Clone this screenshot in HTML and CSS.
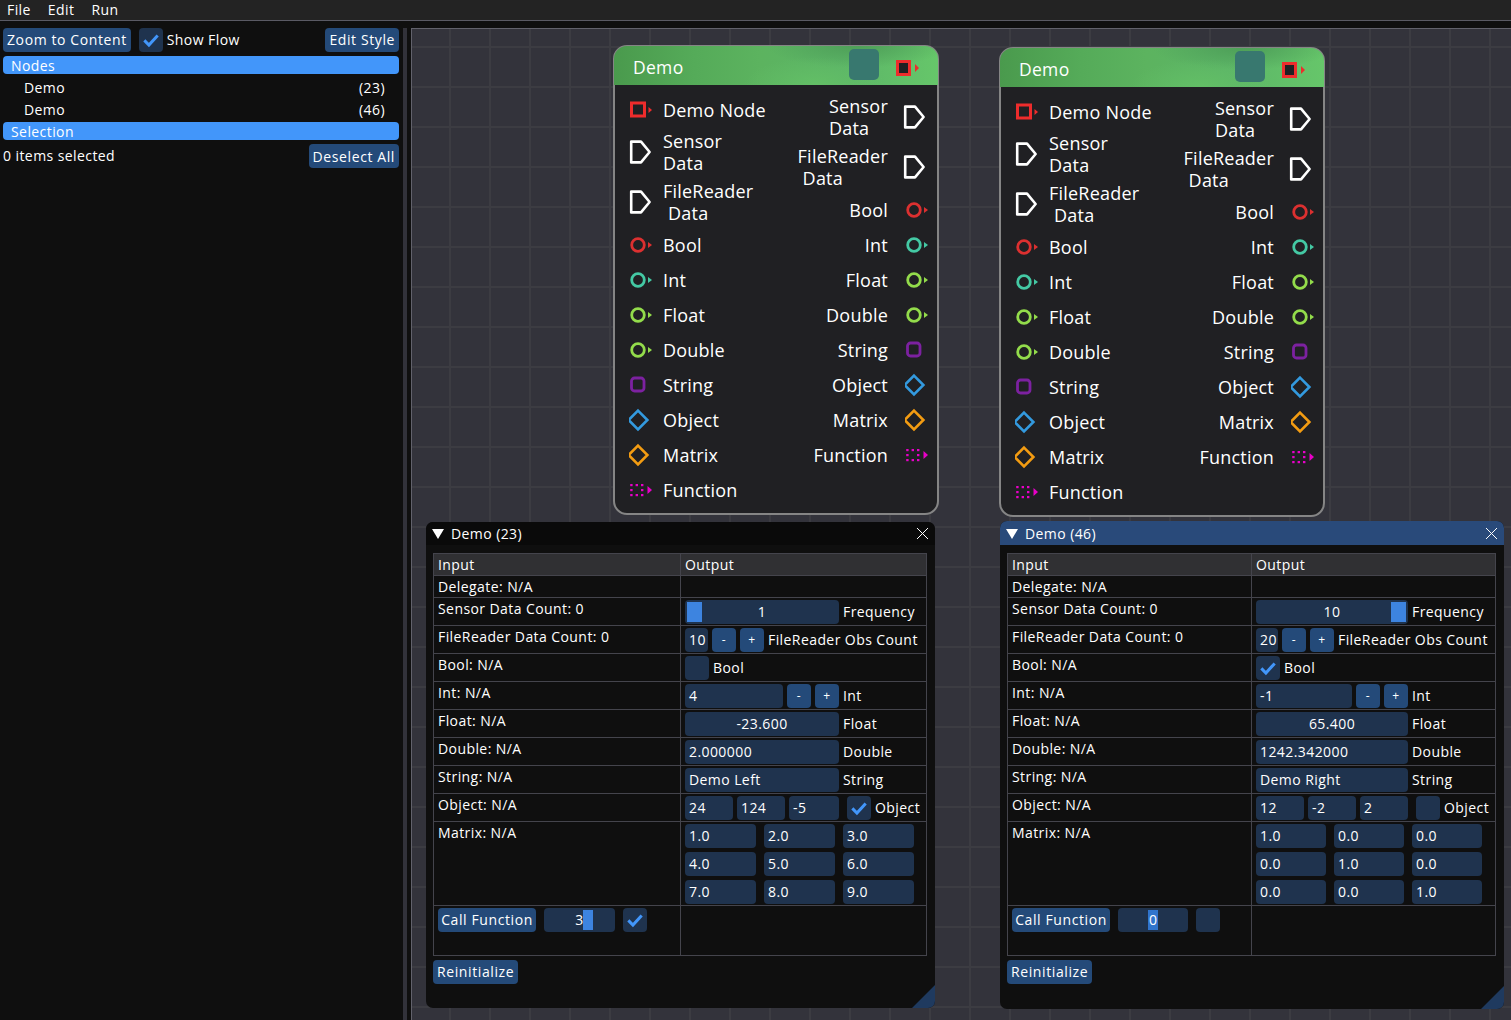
FILE: index.html
```html
<!DOCTYPE html>
<html lang="en">
<head>
    <meta charset="UTF-8">
    <meta name="viewport" content="width=device-width, initial-scale=1.0">
    <title>Blueprint Demo</title>
    <link rel="stylesheet" href="styles.css">
</head>
<body>
    <svg class="defs" width="0" height="0">
        <defs>
            <symbol id="check" viewBox="0 0 24 24"><path d="M4 12.5 L9.5 18 L20 6.5" fill="none" stroke="#4296fa" stroke-width="3.6"/></symbol>
            <symbol id="flow" viewBox="0 0 24 24"><path d="M2.2 1.6 H12 L20.6 12 L12 22.4 H2.2 Z" fill="none" stroke="#fff" stroke-width="2.6" stroke-linejoin="round"/></symbol>
            <symbol id="ring" viewBox="0 0 24 24"><circle cx="9" cy="12" r="6.3" fill="none" stroke="currentColor" stroke-width="2.8"/><path d="M19 9 L23 12 L19 15 Z" fill="currentColor"/></symbol>
            <symbol id="square" viewBox="0 0 24 24"><rect x="2.5" y="5" width="13" height="13" fill="none" stroke="currentColor" stroke-width="3"/><path d="M19.5 9 L23 12 L19.5 15 Z" fill="currentColor"/></symbol>
            <symbol id="rsquare" viewBox="0 0 24 24"><rect x="2.5" y="5" width="12.5" height="13" rx="3" fill="none" stroke="currentColor" stroke-width="2.8"/></symbol>
            <symbol id="diamond" viewBox="0 0 24 24"><path d="M9 2.6 L18.4 12 L9 21.4 L-0.4 12 Z" fill="none" stroke="currentColor" stroke-width="2.6"/></symbol>
            <symbol id="grip" viewBox="0 0 24 24">
                <g fill="currentColor">
                    <rect x="1.2" y="6" width="2.4" height="2.2"/><rect x="6.6" y="6" width="2.4" height="2.2"/><rect x="12" y="6" width="2.4" height="2.2"/>
                    <rect x="1.2" y="11" width="2.4" height="2.2"/><rect x="12" y="11" width="2.4" height="2.2"/>
                    <rect x="1.2" y="16" width="2.4" height="2.2"/><rect x="6.6" y="16" width="2.4" height="2.2"/><rect x="12" y="16" width="2.4" height="2.2"/>
                    <path d="M18.5 8 L23 12 L18.5 16 Z"/>
                </g>
            </symbol>
        </defs>
    </svg>

    <header class="menubar">
        <span>File</span>
        <span>Edit</span>
        <span>Run</span>
    </header>

    <div class="main">
        <aside class="sidebar">
            <div class="side-row">
                <button class="btn">Zoom to Content</button>
                <span class="check"><svg><use href="#check"/></svg></span>
                <span class="side-label">Show Flow</span>
                <button class="btn push">Edit Style</button>
            </div>
            <div class="side-head">Nodes</div>
            <div class="side-item"><span>Demo</span><span>(23)</span></div>
            <div class="side-item"><span>Demo</span><span>(46)</span></div>
            <div class="side-head side-head-sel">Selection</div>
            <div class="side-row side-row-sel">
                <span>0 items selected</span>
                <button class="btn push">Deselect All</button>
            </div>
        </aside>
        <div class="splitter"></div>

        <section class="canvas">
            <!-- left node -->
            <div class="node node-left">
                <div class="node-title">
                    <span>Demo</span>
                    <span class="node-thumb"></span>
                    <span class="node-flow"></span>
                    <span class="node-flow-arrow"></span>
                </div>
                <div class="node-body">
                    <div class="pins">
                        <div class="pin"><svg class="c-red"><use href="#square"/></svg><span>Demo Node</span></div>
                        <div class="pin pin-tall"><svg class="flow"><use href="#flow"/></svg><span>Sensor<br>Data</span></div>
                        <div class="pin pin-tall"><svg class="flow"><use href="#flow"/></svg><span>FileReader<br><span class="indent">Data</span></span></div>
                        <div class="pin"><svg class="c-bool"><use href="#ring"/></svg><span>Bool</span></div>
                        <div class="pin"><svg class="c-int"><use href="#ring"/></svg><span>Int</span></div>
                        <div class="pin"><svg class="c-float"><use href="#ring"/></svg><span>Float</span></div>
                        <div class="pin"><svg class="c-float"><use href="#ring"/></svg><span>Double</span></div>
                        <div class="pin"><svg class="c-string"><use href="#rsquare"/></svg><span>String</span></div>
                        <div class="pin"><svg class="c-object"><use href="#diamond"/></svg><span>Object</span></div>
                        <div class="pin"><svg class="c-matrix"><use href="#diamond"/></svg><span>Matrix</span></div>
                        <div class="pin"><svg class="c-func"><use href="#grip"/></svg><span>Function</span></div>
                    </div>
                    <div class="pins pins-out">
                        <div class="pin pin-tall"><span>Sensor<br>Data</span><svg class="flow"><use href="#flow"/></svg></div>
                        <div class="pin pin-tall"><span>FileReader<br><span class="indent">Data</span></span><svg class="flow"><use href="#flow"/></svg></div>
                        <div class="pin"><span>Bool</span><svg class="c-bool"><use href="#ring"/></svg></div>
                        <div class="pin"><span>Int</span><svg class="c-int"><use href="#ring"/></svg></div>
                        <div class="pin"><span>Float</span><svg class="c-float"><use href="#ring"/></svg></div>
                        <div class="pin"><span>Double</span><svg class="c-float"><use href="#ring"/></svg></div>
                        <div class="pin"><span>String</span><svg class="c-string"><use href="#rsquare"/></svg></div>
                        <div class="pin"><span>Object</span><svg class="c-object"><use href="#diamond"/></svg></div>
                        <div class="pin"><span>Matrix</span><svg class="c-matrix"><use href="#diamond"/></svg></div>
                        <div class="pin"><span>Function</span><svg class="c-func"><use href="#grip"/></svg></div>
                    </div>
                </div>
            </div>

            <!-- right node -->
            <div class="node node-right">
                <div class="node-title">
                    <span>Demo</span>
                    <span class="node-thumb"></span>
                    <span class="node-flow"></span>
                    <span class="node-flow-arrow"></span>
                </div>
                <div class="node-body">
                    <div class="pins">
                        <div class="pin"><svg class="c-red"><use href="#square"/></svg><span>Demo Node</span></div>
                        <div class="pin pin-tall"><svg class="flow"><use href="#flow"/></svg><span>Sensor<br>Data</span></div>
                        <div class="pin pin-tall"><svg class="flow"><use href="#flow"/></svg><span>FileReader<br><span class="indent">Data</span></span></div>
                        <div class="pin"><svg class="c-bool"><use href="#ring"/></svg><span>Bool</span></div>
                        <div class="pin"><svg class="c-int"><use href="#ring"/></svg><span>Int</span></div>
                        <div class="pin"><svg class="c-float"><use href="#ring"/></svg><span>Float</span></div>
                        <div class="pin"><svg class="c-float"><use href="#ring"/></svg><span>Double</span></div>
                        <div class="pin"><svg class="c-string"><use href="#rsquare"/></svg><span>String</span></div>
                        <div class="pin"><svg class="c-object"><use href="#diamond"/></svg><span>Object</span></div>
                        <div class="pin"><svg class="c-matrix"><use href="#diamond"/></svg><span>Matrix</span></div>
                        <div class="pin"><svg class="c-func"><use href="#grip"/></svg><span>Function</span></div>
                    </div>
                    <div class="pins pins-out">
                        <div class="pin pin-tall"><span>Sensor<br>Data</span><svg class="flow"><use href="#flow"/></svg></div>
                        <div class="pin pin-tall"><span>FileReader<br><span class="indent">Data</span></span><svg class="flow"><use href="#flow"/></svg></div>
                        <div class="pin"><span>Bool</span><svg class="c-bool"><use href="#ring"/></svg></div>
                        <div class="pin"><span>Int</span><svg class="c-int"><use href="#ring"/></svg></div>
                        <div class="pin"><span>Float</span><svg class="c-float"><use href="#ring"/></svg></div>
                        <div class="pin"><span>Double</span><svg class="c-float"><use href="#ring"/></svg></div>
                        <div class="pin"><span>String</span><svg class="c-string"><use href="#rsquare"/></svg></div>
                        <div class="pin"><span>Object</span><svg class="c-object"><use href="#diamond"/></svg></div>
                        <div class="pin"><span>Matrix</span><svg class="c-matrix"><use href="#diamond"/></svg></div>
                        <div class="pin"><span>Function</span><svg class="c-func"><use href="#grip"/></svg></div>
                    </div>
                </div>
            </div>

            <!-- left window -->
            <div class="win win-left">
                <div class="win-title">
                    <span class="win-arrow"></span>
                    <span>Demo (23)</span>
                    <span class="win-close"></span>
                </div>
                <div class="win-body">
                    <div class="table">
                        <div class="row row-head"><div class="cell">Input</div><div class="cell">Output</div></div>
                        <div class="row row-text"><div class="cell">Delegate: N/A</div><div class="cell"></div></div>
                        <div class="row">
                            <div class="cell">Sensor Data Count: 0</div>
                            <div class="cell ctl"><span class="field field-main center-text">1<i class="grab" style="left: 2px"></i></span><span>Frequency</span></div>
                        </div>
                        <div class="row">
                            <div class="cell">FileReader Data Count: 0</div>
                            <div class="cell ctl"><span class="field field-tiny">10</span><button class="step">-</button><button class="step">+</button><span>FileReader Obs Count</span></div>
                        </div>
                        <div class="row">
                            <div class="cell">Bool: N/A</div>
                            <div class="cell ctl"><span class="check"></span><span>Bool</span></div>
                        </div>
                        <div class="row">
                            <div class="cell">Int: N/A</div>
                            <div class="cell ctl"><span class="field field-int">4</span><button class="step">-</button><button class="step">+</button><span>Int</span></div>
                        </div>
                        <div class="row">
                            <div class="cell">Float: N/A</div>
                            <div class="cell ctl"><span class="field field-main center-text">-23.600</span><span>Float</span></div>
                        </div>
                        <div class="row">
                            <div class="cell">Double: N/A</div>
                            <div class="cell ctl"><span class="field field-main">2.000000</span><span>Double</span></div>
                        </div>
                        <div class="row">
                            <div class="cell">String: N/A</div>
                            <div class="cell ctl"><span class="field field-main">Demo Left</span><span>String</span></div>
                        </div>
                        <div class="row">
                            <div class="cell">Object: N/A</div>
                            <div class="cell ctl"><span class="field field-obj">24</span><span class="field field-obj">124</span><span class="field field-obj field-obj-last">-5</span><span class="check check-obj"><svg><use href="#check"/></svg></span><span>Object</span></div>
                        </div>
                        <div class="row row-matrix">
                            <div class="cell">Matrix: N/A</div>
                            <div class="cell matrix">
                                <span class="field">1.0</span><span class="field">2.0</span><span class="field">3.0</span>
                                <span class="field">4.0</span><span class="field">5.0</span><span class="field">6.0</span>
                                <span class="field">7.0</span><span class="field">8.0</span><span class="field">9.0</span>
                            </div>
                        </div>
                        <div class="row row-call">
                            <div class="cell ctl-call"><button class="btn btn-call">Call Function</button><span class="field field-call center-text">3<i class="grab grab-thin" style="left: 39px"></i></span><span class="check"><svg><use href="#check"/></svg></span></div>
                            <div class="cell"></div>
                        </div>
                    </div>
                    <button class="btn btn-reinit">Reinitialize</button>
                </div>
                <span class="win-grip"></span>
            </div>

            <!-- right window, this one has focus -->
            <div class="win win-right">
                <div class="win-title">
                    <span class="win-arrow"></span>
                    <span>Demo (46)</span>
                    <span class="win-close"></span>
                </div>
                <div class="win-body">
                    <div class="table">
                        <div class="row row-head"><div class="cell">Input</div><div class="cell">Output</div></div>
                        <div class="row row-text"><div class="cell">Delegate: N/A</div><div class="cell"></div></div>
                        <div class="row">
                            <div class="cell">Sensor Data Count: 0</div>
                            <div class="cell ctl"><span class="field field-main center-text">10<i class="grab" style="left: 135px"></i></span><span>Frequency</span></div>
                        </div>
                        <div class="row">
                            <div class="cell">FileReader Data Count: 0</div>
                            <div class="cell ctl"><span class="field field-tiny">20</span><button class="step">-</button><button class="step">+</button><span>FileReader Obs Count</span></div>
                        </div>
                        <div class="row">
                            <div class="cell">Bool: N/A</div>
                            <div class="cell ctl"><span class="check"><svg><use href="#check"/></svg></span><span>Bool</span></div>
                        </div>
                        <div class="row">
                            <div class="cell">Int: N/A</div>
                            <div class="cell ctl"><span class="field field-int">-1</span><button class="step">-</button><button class="step">+</button><span>Int</span></div>
                        </div>
                        <div class="row">
                            <div class="cell">Float: N/A</div>
                            <div class="cell ctl"><span class="field field-main center-text">65.400</span><span>Float</span></div>
                        </div>
                        <div class="row">
                            <div class="cell">Double: N/A</div>
                            <div class="cell ctl"><span class="field field-main">1242.342000</span><span>Double</span></div>
                        </div>
                        <div class="row">
                            <div class="cell">String: N/A</div>
                            <div class="cell ctl"><span class="field field-main">Demo Right</span><span>String</span></div>
                        </div>
                        <div class="row">
                            <div class="cell">Object: N/A</div>
                            <div class="cell ctl"><span class="field field-obj">12</span><span class="field field-obj">-2</span><span class="field field-obj">2</span><span class="check check-obj"></span><span>Object</span></div>
                        </div>
                        <div class="row row-matrix">
                            <div class="cell">Matrix: N/A</div>
                            <div class="cell matrix">
                                <span class="field">1.0</span><span class="field">0.0</span><span class="field">0.0</span>
                                <span class="field">0.0</span><span class="field">1.0</span><span class="field">0.0</span>
                                <span class="field">0.0</span><span class="field">0.0</span><span class="field">1.0</span>
                            </div>
                        </div>
                        <div class="row row-call">
                            <div class="cell ctl-call"><button class="btn btn-call">Call Function</button><span class="field field-call center-text"><span class="text-sel">0</span></span><span class="check"></span></div>
                            <div class="cell"></div>
                        </div>
                    </div>
                    <button class="btn btn-reinit">Reinitialize</button>
                </div>
                <span class="win-grip"></span>
            </div>
        </section>
    </div>
</body>
</html>
```

FILE: styles.css
```css
* {
    box-sizing: border-box;
}
html, body {
    height: 100%;
}
body {
    margin: 0;
    overflow: hidden;
    background-color: #0f0f0f;
    color: #fff;
    font-family: "Open Sans", "Noto Sans", sans-serif;
    font-size: 14px;
    line-height: 18px;
    letter-spacing: 0.42px;
}
button {
    font: inherit;
    letter-spacing: inherit;
    color: inherit;
    border: none;
    padding: 0;
}
.defs {
    position: absolute;
}

/* menu */
.menubar {
    height: 21px;
    display: flex;
    gap: 17px;
    padding: 1px 0 0 7px;
    background-color: #232323;
    border-bottom: 1px solid #5a5a64;
}

.main {
    display: flex;
    height: 999px;
}

/* left panel */
.sidebar {
    width: 403px;
    padding: 7px 4px 0 3px;
    flex-shrink: 0;
}
.side-row {
    display: flex;
    align-items: center;
    height: 24px;
}
.side-row-sel {
    margin-top: 4px;
    line-height: 26px;
}
.side-label {
    margin-left: 4px;
}
.push {
    margin-left: auto;
}
.side-head {
    height: 18px;
    margin-top: 4px;
    padding: 1px 0 0 8px;
    background-color: #4296fa;
    border-radius: 4px;
}
.side-item {
    display: flex;
    justify-content: space-between;
    height: 22px;
    padding: 5px 14px 0 21px;
}
.splitter {
    width: 4px;
    margin-top: 7px;
    background-color: #32323a;
    flex-shrink: 0;
}

.btn {
    height: 24px;
    padding: 0 4px;
    letter-spacing: 0.6px;
    background-color: #244a79;
    border-radius: 4px;
}
.btn-call {
    width: 98px;
    padding: 0;
    flex-shrink: 0;
}
.check {
    display: flex;
    align-items: center;
    justify-content: center;
    width: 24px;
    height: 24px;
    flex-shrink: 0;
    background-color: #1f334e;
    border-radius: 4px;
}
.side-row .btn + .check {
    margin-left: 8px;
}
.check svg {
    width: 20px;
    height: 20px;
}

/* node canvas */
.canvas {
    position: relative;
    flex: 1;
    margin: 7px 0 0 4px;
    background-color: #33333b;
    background-image:
        linear-gradient(#3c3c42 2px, transparent 2px),
        linear-gradient(90deg, #3c3c42 2px, transparent 2px);
    background-size: 40px 40px;
    background-position: 37px 17px;
    overflow: hidden;
    border-left: 1px solid #62626c;
    border-top: 1px solid #62626c;
}

.node {
    position: absolute;
    width: 326px;
    height: 470px;
    background-color: #202023;
    border: 2px solid #858585;
    border-radius: 14px;
}
.node-left {
    left: 201px;
    top: 16px;
}
.node-right {
    left: 587px;
    top: 18px;
}
.node-title {
    position: relative;
    height: 39px;
    margin: -1px -1px 0;
    padding: 12px 0 0 19px;
    font-size: 17.5px;
    letter-spacing: 0.3px;
    border-radius: 13px 13px 0 0;
    background:
        radial-gradient(ellipse 70px 28px at 62% 100%, #63bf66 0%, rgba(99, 191, 102, 0) 100%),
        radial-gradient(ellipse 90px 22px at 75% 0%, #4e9f58 0%, rgba(78, 159, 88, 0) 100%),
        linear-gradient(90deg, #4a9a4d 0%, #55ab59 25%, #5cb35f 45%, #5cb567 70%, #66c66a 100%);
}
.node-thumb {
    position: absolute;
    left: 235px;
    top: 3px;
    width: 30px;
    height: 31px;
    background-color: #38786f;
    border-radius: 5px;
}
.node-flow {
    position: absolute;
    left: 282px;
    top: 14px;
    width: 15px;
    height: 16px;
    background-color: #202023;
    border: 3px solid #ee2c2c;
}
.node-flow-arrow {
    position: absolute;
    left: 301px;
    top: 18px;
    border-left: 4px solid #ee2c2c;
    border-top: 4px solid transparent;
    border-bottom: 4px solid transparent;
}
.node-body {
    display: flex;
    justify-content: space-between;
    padding: 8px 8px 0 14px;
    font-size: 18px;
    line-height: 22.5px;
    letter-spacing: 0.22px;
}
.pins {
    display: flex;
    flex-direction: column;
}
.pins-out {
    align-items: flex-end;
}
.pins-out .pin {
    gap: 17px;
}
.pin {
    display: flex;
    align-items: center;
    gap: 10px;
    height: 35px;
}
.pin-tall {
    height: 50px;
}
.pin-tall > span {
    margin-top: -2px;
}
.indent {
    padding-left: 5px;
}
.pin svg {
    width: 24px;
    height: 24px;
    margin-top: -2px;
    flex-shrink: 0;
    overflow: visible;
}
.pins-out .pin svg.flow {
    margin: -2px 2px 0 -2px;
}
.c-red { color: #ee2c2c; }
.c-bool { color: #dc3030; }
.c-int { color: #44c9a4; }
.c-float { color: #93dc4b; }
.c-string { color: #7c21a0; }
.c-object { color: #339adf; }
.c-matrix { color: #f39c12; }
.c-func { color: #e800c8; }

/* property windows */
.win {
    position: absolute;
    top: 493px;
    height: 486px;
    background-color: #0f0f0f;
    border-radius: 7px;
    overflow: hidden;
}
.win-left {
    left: 14px;
    width: 509px;
}
.win-right {
    left: 588px;
    top: 492px;
    width: 504px;
    height: 488px;
}
.win-title {
    display: flex;
    align-items: center;
    gap: 7px;
    height: 23px;
    padding-left: 6px;
    background-color: #0a0a0a;
}
.win-right .win-title {
    height: 24px;
    padding-top: 1px;
    background-color: #294a7a;
}
.win-arrow {
    border-top: 10px solid #fff;
    border-left: 6px solid transparent;
    border-right: 6px solid transparent;
}
.win-close {
    position: absolute;
    right: 7px;
    top: 6px;
    width: 11px;
    height: 11px;
    background:
        linear-gradient(45deg, transparent 46%, #fff 46%, #fff 54%, transparent 54%),
        linear-gradient(-45deg, transparent 46%, #fff 46%, #fff 54%, transparent 54%);
}
.win-right .win-close {
    top: 7px;
}
.win-body {
    padding: 8px 8px 0 7px;
}
.table {
    border: 1px solid #44444c;
}
.row {
    display: grid;
    grid-template-columns: 246px 1fr;
    height: 28px;
    border-bottom: 1px solid #44444c;
}
.win-right .row {
    grid-template-columns: 243px 1fr;
}
.row:last-child {
    border-bottom: none;
}
.row-head {
    height: 22px;
    background-color: #303033;
}
.row-text {
    height: 22px;
}
.row-matrix {
    height: 84px;
}
.row-call {
    height: 49px;
}
.cell {
    min-width: 0;
    padding: 2px 0 0 4px;
    border-left: 1px solid #44444c;
    white-space: nowrap;
}
.cell:first-child {
    border-left: none;
}
.ctl {
    display: flex;
    gap: 4px;
    padding-top: 2px;
    line-height: 24px;
}
.ctl-call {
    display: flex;
    gap: 8px;
    padding-top: 2px;
}
.field {
    position: relative;
    display: block;
    height: 24px;
    padding-left: 4px;
    line-height: 24px;
    background-color: #1f334e;
    border-radius: 4px;
    flex-shrink: 0;
}
.center-text {
    text-align: center;
    padding-left: 0;
}
.field-main {
    width: 154px;
}
.win-right .field-main {
    width: 152px;
}
.field-tiny {
    width: 23px;
}
.win-right .field-tiny {
    width: 22px;
}
.field-int {
    width: 98px;
}
.win-right .field-int {
    width: 96px;
}
.field-obj {
    width: 48px;
}
.field-obj-last {
    width: 50px;
}
.field-call {
    width: 71px;
}
.win-right .field-call {
    width: 70px;
}
.check-obj {
    margin-left: 4px;
}
.step {
    width: 24px;
    height: 24px;
    background-color: #244a79;
    border-radius: 4px;
    font-size: 12px;
}
.matrix {
    display: grid;
    grid-template-columns: repeat(3, 71px);
    grid-auto-rows: 24px;
    gap: 4px 8px;
    padding-top: 2px;
}
.win-right .matrix {
    grid-template-columns: repeat(3, 70px);
}
.grab {
    position: absolute;
    top: 2px;
    width: 15px;
    height: 20px;
    background-color: #3d84e0;
}
.grab-thin {
    width: 10px;
}
.text-sel {
    display: inline-block;
    width: 10px;
    height: 20px;
    margin-top: 2px;
    line-height: 20px;
    text-align: center;
    letter-spacing: 0;
    vertical-align: top;
    background-color: #3074cc;
}
.btn-reinit {
    display: block;
    margin-top: 4px;
}
.win-grip {
    position: absolute;
    right: 0;
    bottom: 0;
    border-bottom: 23px solid #1f3a5f;
    border-left: 23px solid transparent;
}
```
